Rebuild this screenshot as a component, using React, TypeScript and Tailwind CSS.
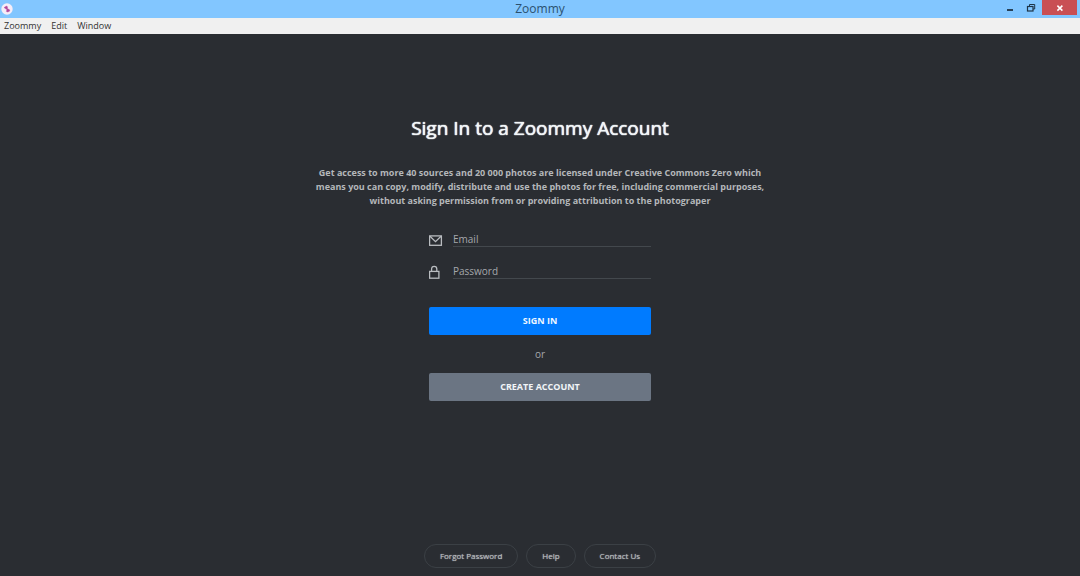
import React, { useState } from 'react';

const menuItems = ['Zoommy', 'Edit', 'Window'];
const footerLinks = ['Forgot Password', 'Help', 'Contact Us'];

function AppLogo() {
  return (
    <svg viewBox="0 0 12 12" className="ml-px h-3 w-3" aria-hidden="true">
      <circle cx="6" cy="6" r="5.7" fill="#f6edf7" />
      <path d="M3 4.6 5.4 3 6.6 3.8 6.4 5.4 8.9 7 8.3 8.4 6.2 9.1 5.2 8.3 6 6.8 4.6 5.8Z" fill="#b0489c" stroke="#b0489c" strokeWidth="0.3" strokeLinejoin="round" />
    </svg>
  );
}

function MailIcon() {
  return (
    <svg viewBox="0 0 14 12" className="h-3 w-[14px]" fill="none" stroke="#b9bcc0" strokeWidth="1.3" aria-hidden="true">
      <rect x="0.6" y="0.9" width="11.8" height="9.4" />
      <path d="M1 1.3 6.5 6.7 12 1.3" />
    </svg>
  );
}

function LockIcon() {
  return (
    <svg viewBox="0 0 12 14" className="h-[14px] w-3" fill="none" stroke="#b9bcc0" strokeWidth="1.3" aria-hidden="true">
      <rect x="0.6" y="6.4" width="9.3" height="6.8" />
      <path d="M2.6 6.2V4C2.6 2.4 3.7 1.3 5.2 1.3S7.8 2.4 7.8 4v2.2" />
    </svg>
  );
}

function TitleBar() {
  return (
    <header className="grid h-[18px] grid-cols-[1fr_auto_1fr] items-center bg-[#82c6ff]">
      <AppLogo />
      <span className="text-[12px] leading-[18px] text-[#2b506e]">Zoommy</span>
      <div className="flex h-full items-start justify-end pr-[3px]">
        <button type="button" aria-label="Minimize" className="flex h-[15px] w-5 items-center justify-center">
          <svg viewBox="0 0 10 10" className="h-[10px] w-[10px]" aria-hidden="true">
            <path d="M2 7h6" stroke="#1d3447" strokeWidth="1.8" />
          </svg>
        </button>
        <button type="button" aria-label="Restore" className="flex h-[15px] w-[22px] items-center justify-center">
          <svg viewBox="0 0 10 10" className="h-[10px] w-[10px]" fill="none" stroke="#1d3447" aria-hidden="true">
            <rect x="1.5" y="3.5" width="5.5" height="4.5" strokeWidth="1.2" />
            <path d="M3.5 3V1.5h5.2V6H7" />
          </svg>
        </button>
        <button type="button" aria-label="Close" className="flex h-[15px] w-[35px] items-center justify-center bg-[#c94f54]">
          <svg viewBox="0 0 10 10" className="h-[10px] w-[10px]" aria-hidden="true">
            <path d="m2.4 2.6 5 5m0-5-5 5" stroke="#fff" strokeWidth="1.5" />
          </svg>
        </button>
      </div>
    </header>
  );
}

interface FieldProps {
  id: string;
  label: string;
  type: string;
  icon: React.ReactNode;
  value: string;
  onChange: (value: string) => void;
}

function Field({ id, label, type, icon, value, onChange }: FieldProps) {
  return (
    <div className="flex h-4 items-end">
      <label htmlFor={id} aria-label={label} className="w-6 shrink-0">
        {icon}
      </label>
      <input
        id={id}
        type={type}
        placeholder={label}
        value={value}
        onChange={(e) => onChange(e.target.value)}
        className="h-4 min-w-0 flex-1 border-b border-[#43484d] bg-transparent text-[10px] leading-[14px] text-white outline-none placeholder:text-[#a5a8ac]"
      />
    </div>
  );
}

export default function App() {
  const [email, setEmail] = useState('');
  const [password, setPassword] = useState('');

  return (
    <div className="flex min-h-screen flex-col bg-[#2a2d32] font-['Open_Sans',sans-serif]">
      <TitleBar />
      <nav className="flex h-4 items-center gap-[10px] bg-[#f0f0f0] px-1">
        {menuItems.map((item) => (
          <button key={item} type="button" className="text-[9px] leading-4 text-[#333]">
            {item}
          </button>
        ))}
      </nav>

      <main className="flex flex-1 flex-col items-center px-4 pt-20">
        <h1 className="text-[19px] leading-7 font-medium text-[#f2f6f8] [text-shadow:0_0_1px_currentColor,0_0_1px_currentColor]">
          Sign In to a Zoommy Account
        </h1>
        <p className="mt-6 max-w-[450px] text-center text-[9px] leading-[14px] font-bold text-[#b4b7ba]">
          Get access to more 40 sources and 20 000 photos are licensed under Creative Commons Zero which means you can
          copy, modify, distribute and use the photos for free, including commercial purposes, without asking permission
          from or providing attribution to the photograper
        </p>

        <form className="mt-[23px] flex w-full max-w-[222px] flex-col" onSubmit={(e) => e.preventDefault()}>
          <div className="flex flex-col gap-4">
            <Field id="email" label="Email" type="email" icon={<MailIcon />} value={email} onChange={setEmail} />
            <Field id="password" label="Password" type="password" icon={<LockIcon />} value={password} onChange={setPassword} />
          </div>
          <button type="submit" className="mt-7 h-7 rounded-xs bg-[#007bff] text-[9px] font-bold text-[#eef6ff]">
            SIGN IN
          </button>
          <span className="my-3 text-center text-[10px] leading-[14px] text-[#a5a8ac]">or</span>
          <button type="button" className="h-7 rounded-xs bg-[#6b7583] text-[9px] font-bold text-[#f2f5f8]">
            CREATE ACCOUNT
          </button>
        </form>
      </main>

      <footer className="flex justify-center gap-2 pb-2">
        {footerLinks.map((link) => (
          <a
            key={link}
            href="#"
            className="flex h-6 items-center rounded-full border border-[#3b4045] px-[15px] text-[8px] text-[#b4b7bb] [text-shadow:0_0_1px_currentColor]"
          >
            {link}
          </a>
        ))}
      </footer>
    </div>
  );
}
